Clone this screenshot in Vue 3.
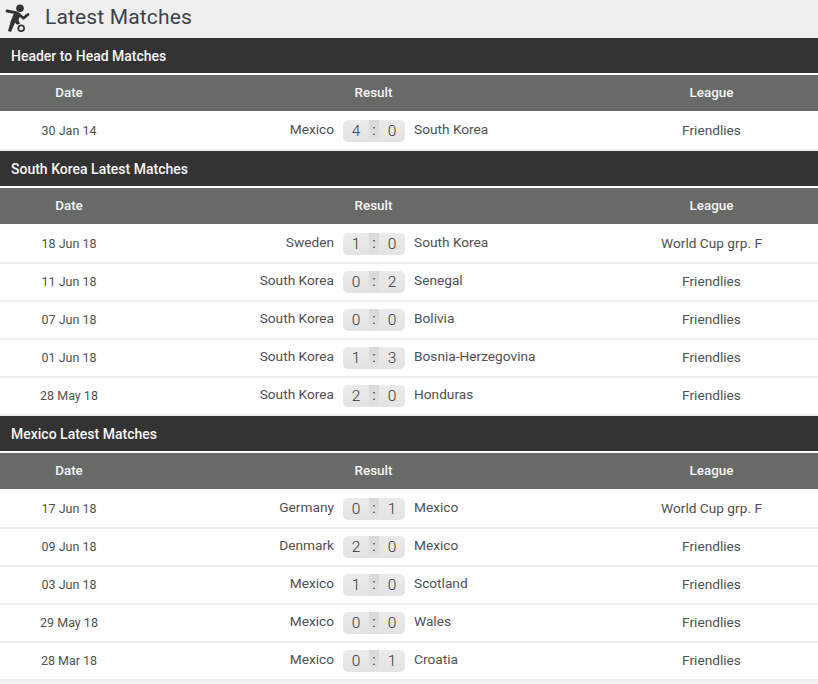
<script setup>
const sections = [
  { title: 'Header to Head Matches', rows: [
    ['30 Jan 14', 'Mexico', 4, 0, 'South Korea', 'Friendlies'],
  ]},
  { title: 'South Korea Latest Matches', rows: [
    ['18 Jun 18', 'Sweden', 1, 0, 'South Korea', 'World Cup grp. F'],
    ['11 Jun 18', 'South Korea', 0, 2, 'Senegal', 'Friendlies'],
    ['07 Jun 18', 'South Korea', 0, 0, 'Bolivia', 'Friendlies'],
    ['01 Jun 18', 'South Korea', 1, 3, 'Bosnia-Herzegovina', 'Friendlies'],
    ['28 May 18', 'South Korea', 2, 0, 'Honduras', 'Friendlies'],
  ]},
  { title: 'Mexico Latest Matches', rows: [
    ['17 Jun 18', 'Germany', 0, 1, 'Mexico', 'World Cup grp. F'],
    ['09 Jun 18', 'Denmark', 2, 0, 'Mexico', 'Friendlies'],
    ['03 Jun 18', 'Mexico', 1, 0, 'Scotland', 'Friendlies'],
    ['29 May 18', 'Mexico', 0, 0, 'Wales', 'Friendlies'],
    ['28 Mar 18', 'Mexico', 0, 1, 'Croatia', 'Friendlies'],
  ]},
]
</script>

<template>
  <div class="page">
    <header class="top">
      <svg class="icon" width="34" height="38" viewBox="0 0 34 38">
        <circle cx="20" cy="8.3" r="3.8" fill="#333"/>
        <path d="M7 11 L17 12.8" fill="none" stroke="#333" stroke-width="2.8" stroke-linecap="round"/>
        <path d="M18 13.5 L23.5 18.2 L28 14.5" fill="none" stroke="#333" stroke-width="2.8" stroke-linecap="round" stroke-linejoin="round"/>
        <path d="M14.5 12 L21 14 L18.5 20 L20 24 L16.5 24.5 L15 22.5 L11 32 L8 31 L11 20.5 Z" fill="#333"/>
        <circle cx="21.2" cy="28.3" r="2.9" fill="none" stroke="#333" stroke-width="1.8"/>
      </svg>
      <h1>Latest Matches</h1>
    </header>
    <section v-for="s in sections" :key="s.title">
      <div class="bar">{{ s.title }}</div>
      <div class="cols">
        <div class="date">Date</div>
        <div class="result">Result</div>
        <div class="league">League</div>
      </div>
      <div class="row" v-for="r in s.rows" :key="r[0]">
        <div class="date">{{ r[0] }}</div>
        <div class="match">
          <span class="home">{{ r[1] }}</span>
          <span class="score">
            <span class="n">{{ r[2] }}</span><span class="sep">:</span><span class="n">{{ r[3] }}</span>
          </span>
          <span class="away">{{ r[4] }}</span>
        </div>
        <div class="league">{{ r[5] }}</div>
      </div>
    </section>
  </div>
</template>

<style>
html, body { margin: 0; background: #fff; }
</style>

<style scoped>
.page {
  width: 818px;
  height: 684px;
  overflow: hidden;
  background: #f4f4f4;
  font-family: Roboto, sans-serif;
  font-size: 13.7px;
  color: #505050;
}
.top {
  height: 38px;
  display: flex;
  align-items: flex-start;
  background: #efefef;
}
.icon { flex: none; }
h1 {
  margin: 2px 0 0 11px;
  font-size: 21px;
  line-height: 30px;
  font-weight: 400;
  color: #3c4248;
  letter-spacing: .15px;
}
.bar {
  height: 35px;
  line-height: 36px;
  padding-left: 11px;
  background: #333;
  color: #f5f5f5;
  font-size: 14px;
  font-weight: 500;
}
section { background: #fff; }
.cols {
  margin: 2px 0;
  height: 36px;
  line-height: 35px;
  display: flex;
  background: #686a67;
  color: #f5f5f5;
  font-size: 13.4px;
  font-weight: 500;
}
.row {
  height: 36px;
  border-bottom: 2px solid #eeeeee;
  display: flex;
  align-items: center;
  background: #fff;
}
.row .date, .row .league { position: relative; top: -1px; }
.row .date { font-size: 12.5px; }
.date { width: 138px; text-align: center; flex: none; }
.result { width: 471px; text-align: center; flex: none; }
.league { width: 205px; text-align: center; flex: none; }
.match { width: 471px; flex: none; display: flex; align-items: center; }
.home { width: 196px; text-align: right; flex: none; margin-top: -5px; }
.away { flex: 1; margin-top: -5px; }
.score {
  margin: 0 9px;
  width: 62px;
  height: 22px;
  flex: none;
  display: flex;
  border-radius: 5px;
  overflow: hidden;
  background: linear-gradient(#ecebeb, #e4e3e3);
  text-align: center;
  line-height: 23px;
  font-size: 15.5px;
  font-weight: 300;
  color: #333;
}
.n { flex: 1; }
.sep { width: 10px; line-height: 21px; font-size: 14px; font-weight: 400; background: linear-gradient(#d8d8d8, #e4e3e3); }
</style>
